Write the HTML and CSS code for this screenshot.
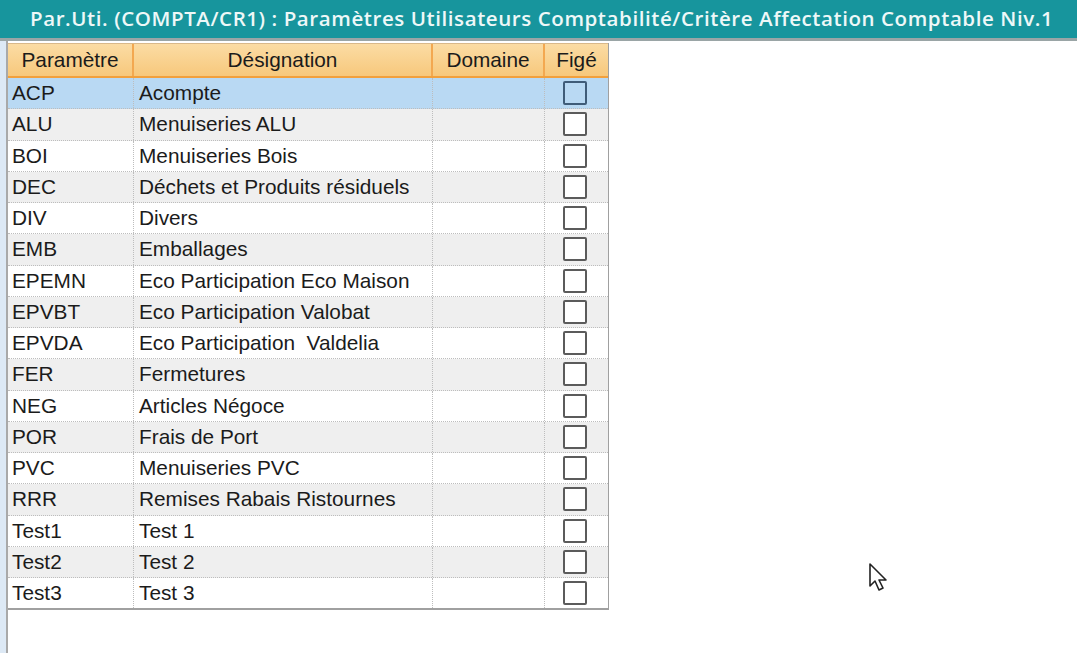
FILE: index.html
```html
<!DOCTYPE html>
<html>
  <head>
    <title>Par.Uti. (COMPTA/CR1)</title>
    <link rel="stylesheet" href="styles.css">
  </head>
  <body>
    <div class="titlebar">Par.Uti. (COMPTA/CR1) : Paramètres Utilisateurs Comptabilité/Critère Affectation Comptable Niv.1</div>
    <div class="page">
      <div class="strip"></div>
      <div class="content">
        <div class="grid">
          <div class="row head">
            <div class="cell c-param">Paramètre</div>
            <div class="cell c-desig">Désignation</div>
            <div class="cell c-dom">Domaine</div>
            <div class="cell c-fige">Figé</div>
          </div>
          <div id="rows"></div>
        </div>
      </div>
    </div>
    <svg class="cursor" width="22" height="32" viewBox="0 0 22 32">
      <path d="M2 2 L2 24 L7 19 L11 28 L15 26 L11 18 L18 18 Z" fill="#fff" stroke="#222" stroke-width="1.6" stroke-linejoin="round"/>
    </svg>
    <script>
    var data = [
      ['ACP', 'Acompte'],
      ['ALU', 'Menuiseries ALU'],
      ['BOI', 'Menuiseries Bois'],
      ['DEC', 'Déchets et Produits résiduels'],
      ['DIV', 'Divers'],
      ['EMB', 'Emballages'],
      ['EPEMN', 'Eco Participation Eco Maison'],
      ['EPVBT', 'Eco Participation Valobat'],
      ['EPVDA', 'Eco Participation  Valdelia'],
      ['FER', 'Fermetures'],
      ['NEG', 'Articles Négoce'],
      ['POR', 'Frais de Port'],
      ['PVC', 'Menuiseries PVC'],
      ['RRR', 'Remises Rabais Ristournes'],
      ['Test1', 'Test 1'],
      ['Test2', 'Test 2'],
      ['Test3', 'Test 3']
    ];
    var $rows = document.querySelector('#rows');
    for (var i = 0; i < data.length; i++) {
      var $row = document.createElement('div');
      $row.className = 'row' + (i === 0 ? ' selected' : (i % 2 ? ' alt' : ''));
      $row.innerHTML =
        '<div class="cell c-param"></div>' +
        '<div class="cell c-desig"></div>' +
        '<div class="cell c-dom"></div>' +
        '<div class="cell c-fige"><span class="check"></span></div>';
      $row.children[0].textContent = data[i][0];
      $row.children[1].textContent = data[i][1];
      $rows.appendChild($row);
    }
    </script>
  </body>
</html>
```
FILE: styles.css
```css
body {
  margin: 0;
  background: #ffffff;
  height: 653px;
  overflow: hidden;
  position: relative;
}

.titlebar {
  height: 38px;
  line-height: 37px;
  background: #17959d;
  color: #eef8f8;
  font-family: 'Open Sans', sans-serif;
  font-weight: 600;
  font-size: 20.5px;
  letter-spacing: 0.58px;
  padding-left: 30px;
  white-space: pre;
  border-bottom: 3px solid #9aa5a6;
  box-sizing: content-box;
}

.page {
  display: flex;
  height: 612px;
}

.strip {
  width: 6px;
  background: #dde9f5;
  border-right: 2px solid #a9a9a9;
}

.content {
  flex: 1;
  padding-top: 2px;
}

.grid {
  width: 600px;
  border-right: 1px solid #a0a0a0;
  border-bottom: 2px solid #a0a0a0;
  font-family: 'Liberation Sans', sans-serif;
  font-size: 20.8px;
  color: #1b1b1b;
}

.row {
  display: flex;
  height: 30.25px;
  border-bottom: 1px dotted #bdbdbd;
  background: #ffffff;
}

.row.alt {
  background: #efefef;
}

.row.selected {
  background: #b9d9f3;
}

.row:last-child {
  border-bottom: none;
}

.row.head {
  height: 32px;
  background: linear-gradient(#fbdca4, #f7c87c);
  border-top: 1px solid #d8b88a;
  border-bottom: 2px solid #f2a03c;
}

.cell {
  padding-left: 4px;
  line-height: 30px;
  border-right: 1px dotted #bdbdbd;
  white-space: pre;
  overflow: hidden;
  box-sizing: border-box;
}

.head .cell {
  padding-left: 0;
  text-align: center;
  border-right: 2px solid #f3a850;
  line-height: 32px;
}

.head .cell:last-child,
.row .cell:last-child {
  border-right: none;
}

.c-param { width: 126px; }
.c-desig { width: 299px; padding-left: 5px; }
.c-dom { width: 112px; }
.c-fige {
  width: 63px;
  display: flex;
  align-items: center;
  justify-content: flex-start;
  padding-left: 18px;
}

.head .c-fige {
  justify-content: center;
  padding-left: 0;
}

.check {
  width: 20px;
  height: 20px;
  border: 2px solid #5b5b5b;
  border-radius: 2px;
  background: #ffffff;
}

.selected .check {
  border-color: #3f5c78;
  background: #b9d9f3;
}

.cursor {
  position: absolute;
  left: 868px;
  top: 562px;
}
```
